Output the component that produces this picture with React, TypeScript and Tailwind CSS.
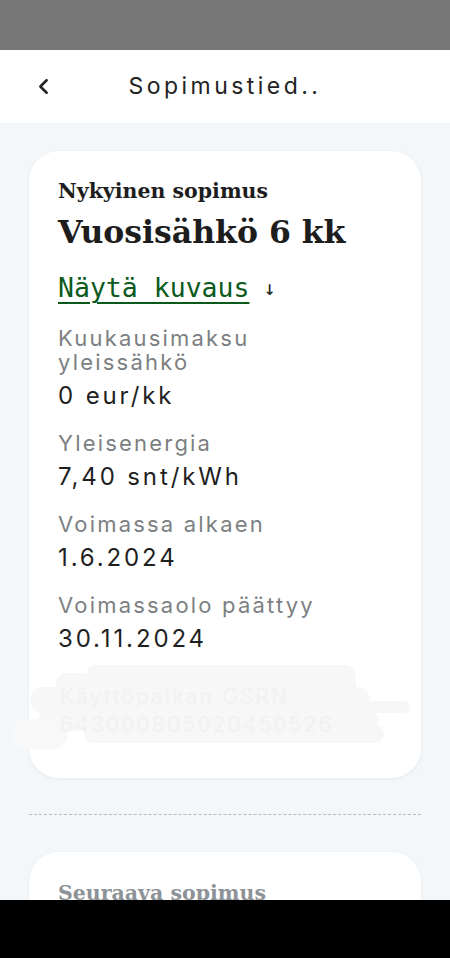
import React from "react";
import { ChevronLeft } from "lucide-react";

const sans = { fontFamily: "Inter, 'Noto Sans', sans-serif" };
const serif = { fontFamily: "'DejaVu Serif', 'Liberation Serif', serif" };
const mono = { fontFamily: "'DejaVu Sans Mono', 'Liberation Mono', monospace" };

const rows = [
  { label: ["Kuukausimaksu", "yleissähkö"], value: "0 eur/kk" },
  { label: ["Yleisenergia"], value: "7,40 snt/kWh" },
  { label: ["Voimassa alkaen"], value: "1.6.2024" },
  { label: ["Voimassaolo päättyy"], value: "30.11.2024" },
];

function Redaction() {
  // hand-drawn scribble covering the metering point id
  return (
    <div className="relative h-[86px] -mx-[58px]">
      <div className="absolute left-[56px] top-[10px] w-[300px] h-[22px] rounded-full bg-[#f7f7f7]" />
      <div className="absolute left-[86px] top-[2px] w-[270px] h-[20px] rounded-full bg-[#f7f7f7]" />
      <div className="absolute left-[30px] top-[24px] w-[340px] h-[26px] rounded-full bg-[#f7f7f7]" />
      <div className="absolute left-[38px] top-[46px] w-[340px] h-[22px] rounded-full bg-[#f7f7f7]" />
      <div className="absolute left-[84px] top-[62px] w-[300px] h-[18px] rounded-full bg-[#f7f7f7]" />
      <div className="absolute left-[12px] top-[56px] w-[56px] h-[30px] rounded-full bg-[#f8f8f8]" />
      <div className="absolute left-[340px] top-[38px] w-[70px] h-[12px] rounded-full bg-[#f7f7f7]" />
      <div className="absolute left-[60px] top-[18px] text-[21px] tracking-[0.1em] text-[#f1f1f1] whitespace-nowrap" style={sans}>
        Käyttöpaikan GSRN
      </div>
      <div className="absolute left-[60px] top-[46px] text-[21px] tracking-[0.1em] text-[#f1f1f1] whitespace-nowrap" style={sans}>
        643000805020450526
      </div>
    </div>
  );
}

export default function App() {
  return (
    <div className="w-[450px] h-[958px] overflow-hidden flex flex-col bg-[#f3f7fa]">
      <div className="h-[50px] shrink-0 bg-[#777777]" />
      <header className="h-[73px] shrink-0 bg-white flex items-center relative">
        <ChevronLeft className="absolute left-[31px] top-[24px] w-[25px] h-[25px] text-[#222]" strokeWidth={2.4} />
        <div className="w-full text-center text-[23px] tracking-[0.15em] text-[#222]" style={sans}>
          Sopimustied..
        </div>
      </header>

      <main className="flex-1 min-h-0 overflow-hidden px-[29px] pt-[28px] flex flex-col">
        <section className="shrink-0 bg-white rounded-[30px] shadow-[0_1px_4px_rgba(0,0,0,0.06)] px-[29px] pt-[27px] pb-[29px]">
          <h3 className="text-[20.5px] font-bold text-[#1d1d1d] leading-[26px]" style={serif}>
            Nykyinen sopimus
          </h3>
          <h2 className="mt-[9px] text-[31.5px] font-bold text-[#1d1d1d] leading-[38px]" style={serif}>
            Vuosisähkö 6 kk
          </h2>
          <div className="mt-[21px] flex items-center gap-[14px] text-[#0b5a1c]" style={mono}>
            <span className="text-[26.5px] leading-[32px] underline underline-offset-[5px] decoration-[2px]">
              Näytä kuvaus
            </span>
            <span className="text-[20px] text-[#222]">↓</span>
          </div>
          <div className="mt-[22px] flex flex-col gap-[21px]">
            {rows.map((r) => (
              <div key={r.value} style={sans}>
                {r.label.map((l) => (
                  <div key={l} className="text-[22px] leading-[24px] tracking-[0.1em] text-[#7c7f82]">
                    {l}
                  </div>
                ))}
                <div className="mt-[8px] text-[24px] leading-[28px] tracking-[0.12em] text-[#1f1f1f]">
                  {r.value}
                </div>
              </div>
            ))}
          </div>
          <div className="mt-[10px]">
            <Redaction />
          </div>
        </section>

        <div className="shrink-0 mt-[36px] border-t border-dashed border-[#b9bcbf]" />

        <section className="shrink-0 mt-[37px] bg-white rounded-t-[30px] shadow-[0_1px_4px_rgba(0,0,0,0.06)] px-[29px] pt-[28px] h-[80px]">
          <h3 className="text-[20.5px] font-bold text-[#8d9296] leading-[26px]" style={serif}>
            Seuraava sopimus
          </h3>
        </section>
      </main>

      <div className="h-[58px] shrink-0 bg-black" />
    </div>
  );
}
